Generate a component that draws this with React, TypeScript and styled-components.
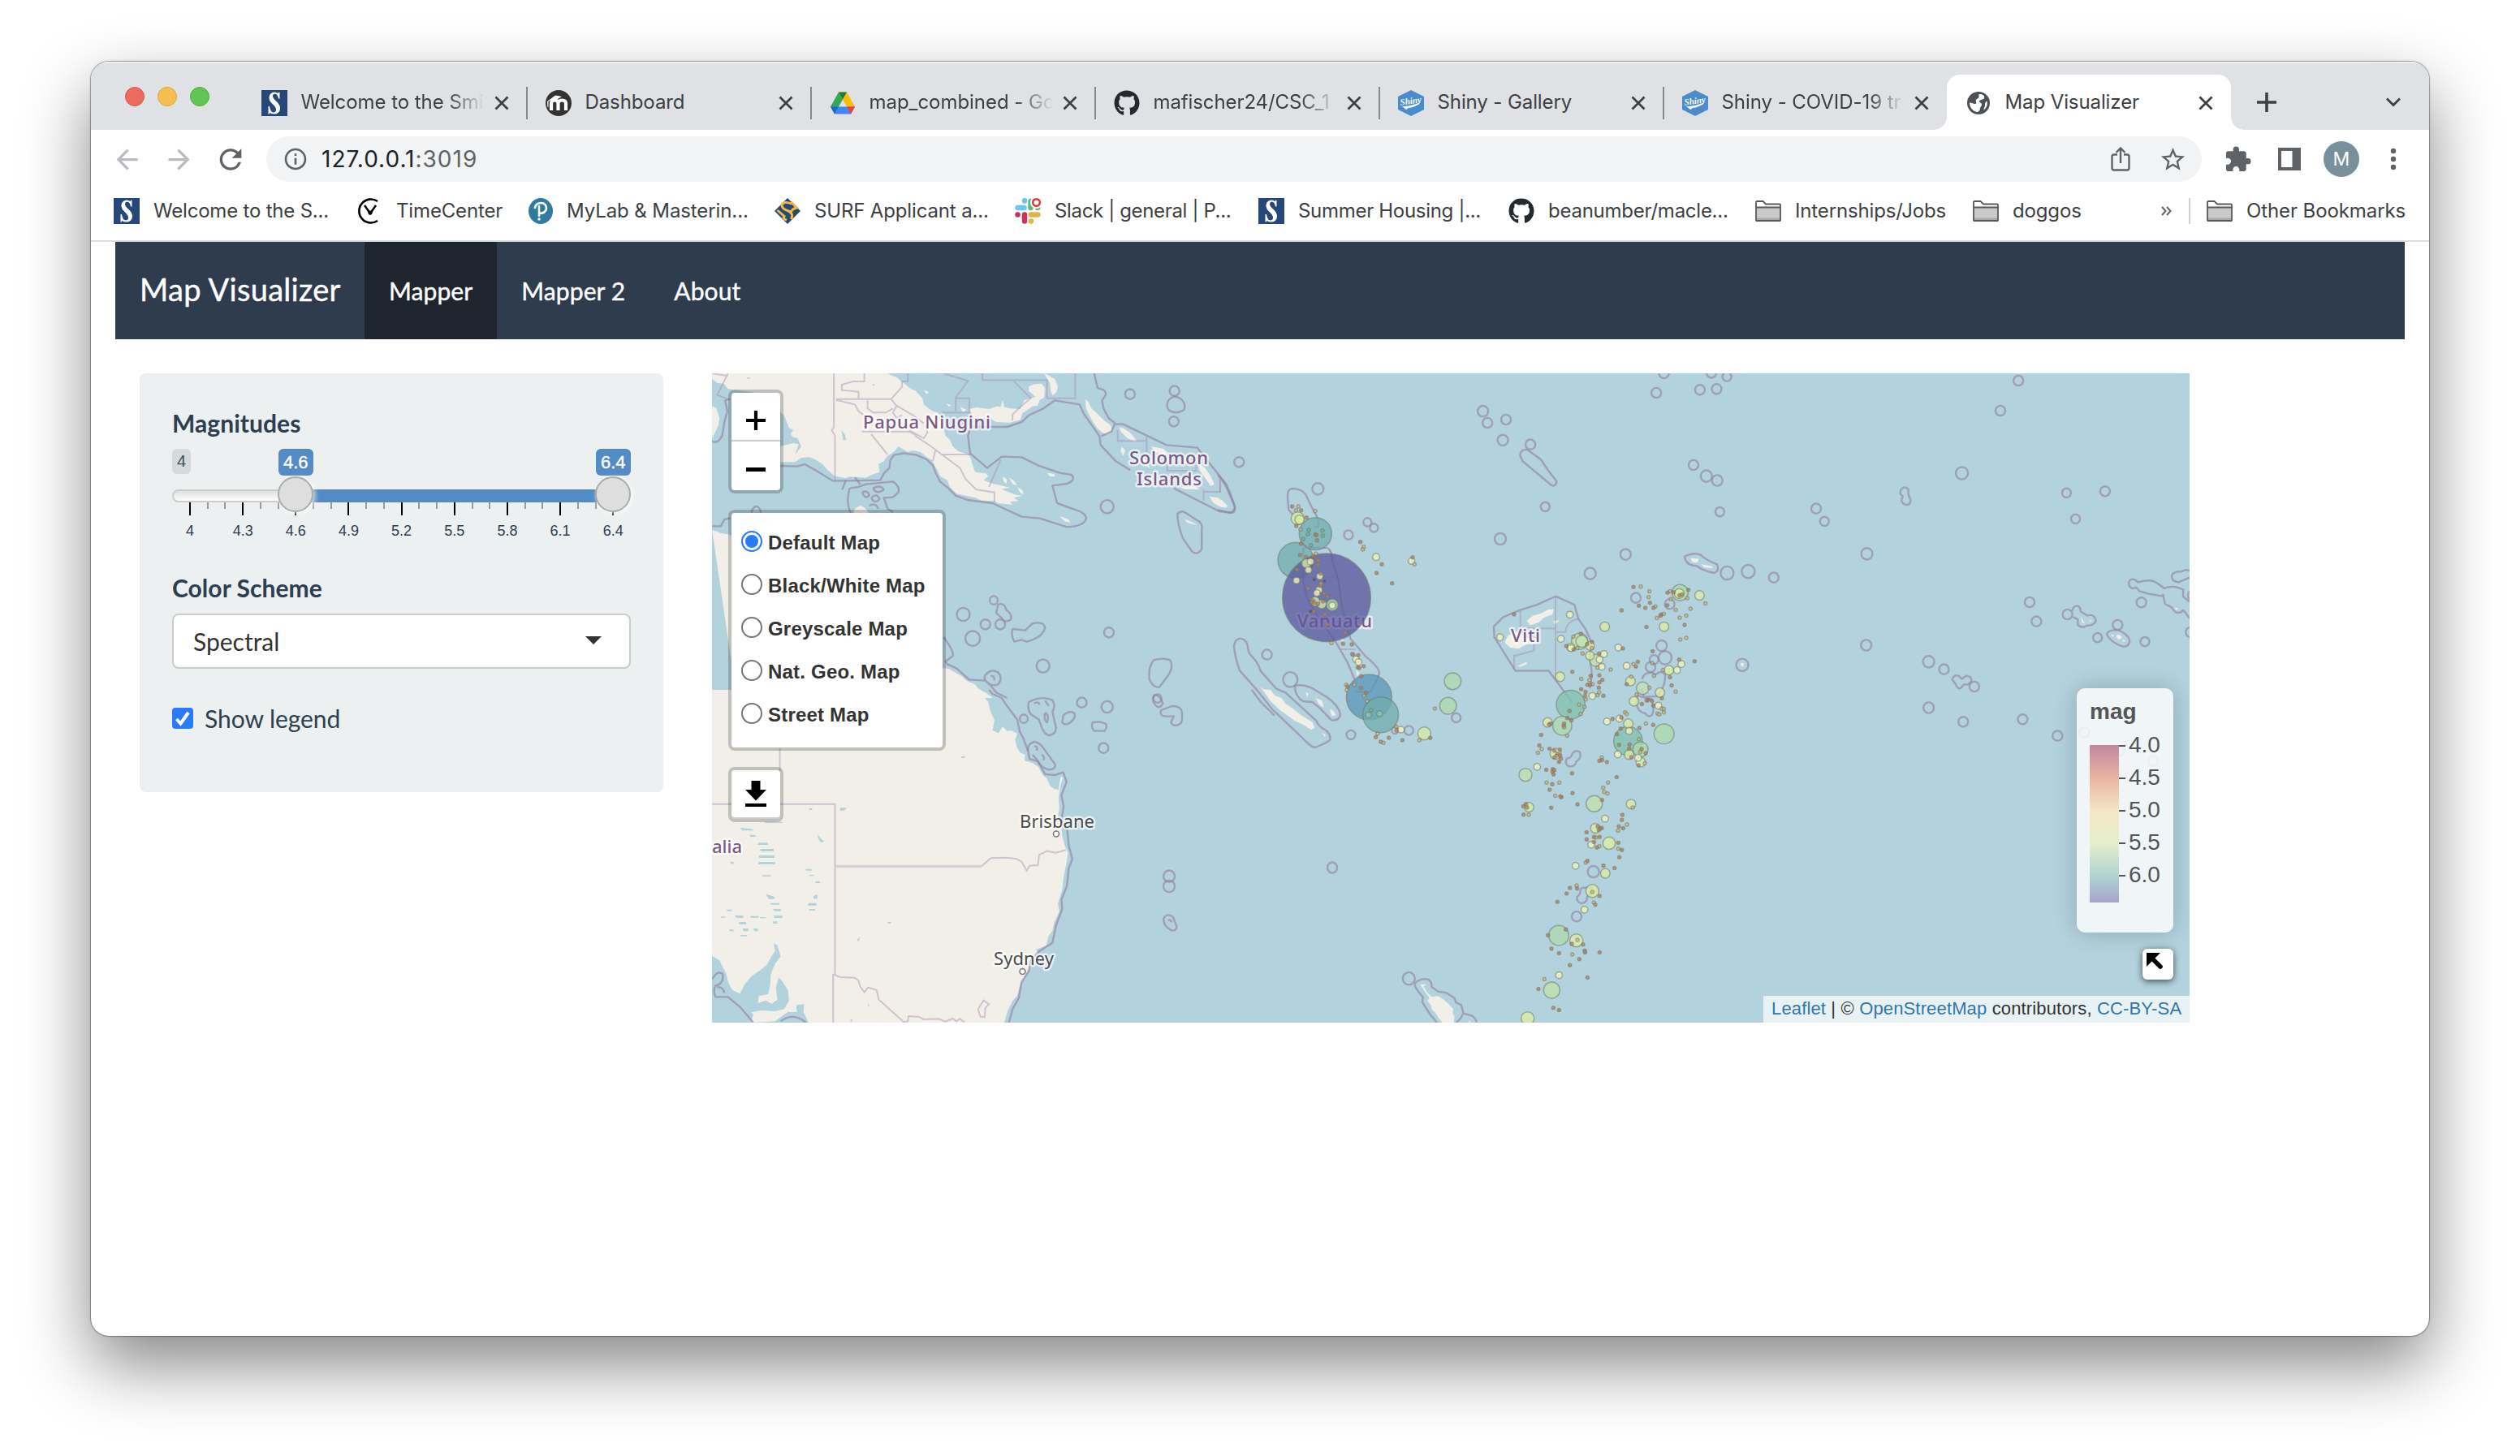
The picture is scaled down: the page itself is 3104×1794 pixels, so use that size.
import React from "react";
import styled, { createGlobalStyle, css } from "styled-components";
import { FaGithub } from "react-icons/fa";
import {
  MdArrowBack,
  MdArrowForward,
  MdExtension,
  MdInfoOutline,
  MdRefresh,
  MdStarOutline,
} from "react-icons/md";

const uiFont = `Inter, "Noto Sans", sans-serif`;
const appFont = `Lato, "Open Sans", sans-serif`;
const arial = `"Liberation Sans", Arial, sans-serif`;
const mapFont = `"Noto Sans", "Open Sans", sans-serif`;

const GlobalStyle = createGlobalStyle`
  * { box-sizing: border-box; }
  html, body { margin: 0; padding: 0; background: #fff; }
  body { width: 3104px; height: 1794px; overflow: hidden; font-family: ${uiFont}; }
`;

/* ---------- window ---------- */

const Desktop = styled.div`
  width: 3104px;
  height: 1794px;
  padding: 76px 112px 0;
  background: #fff;
`;

const Window = styled.div`
  width: 2880px;
  height: 1570px;
  border-radius: 22px;
  overflow: hidden;
  background: #fff;
  box-shadow: 0 0 0 1px rgba(0, 0, 0, 0.2), 0 36px 84px rgba(0, 0, 0, 0.48), 0 0 3px rgba(0, 0, 0, 0.4);
`;

/* ---------- tab strip ---------- */

const TabStrip = styled.div`
  height: 84px;
  display: flex;
  align-items: flex-end;
  background: #dfe1e5;
  box-shadow: inset 0 2px 0 #eff0f2;
  color: #3c4043;
`;

const Lights = styled.div`
  display: flex;
  gap: 16px;
  width: 187px;
  height: 82px;
  padding-left: 42px;
  align-items: center;
`;

const Light = styled.i<{ $c: string; $edge: string }>`
  width: 24px;
  height: 24px;
  border-radius: 50%;
  background: ${(p) => p.$c};
  border: 1px solid ${(p) => p.$edge};
`;

const Tab = styled.div<{ $active?: boolean; $last?: boolean }>`
  position: relative;
  width: ${(p) => (p.$last ? 349 : 350)}px;
  height: 68px;
  display: flex;
  align-items: center;
  padding: 2px 22px 0 23px;
  ${(p) =>
    p.$active
      ? css`
          background: #fff;
          border-radius: 16px 16px 0 0;
          &::before,
          &::after {
            content: "";
            position: absolute;
            bottom: 0;
            width: 16px;
            height: 16px;
          }
          &::before {
            left: -16px;
            background: radial-gradient(circle at 0 0, transparent 15.5px, #fff 16px);
          }
          &::after {
            right: -16px;
            background: radial-gradient(circle at 100% 0, transparent 15.5px, #fff 16px);
          }
        `
      : !p.$last &&
        css`
          &::after {
            content: "";
            position: absolute;
            right: -1px;
            top: 15px;
            width: 2px;
            height: 40px;
            background: #85888d;
          }
        `}
`;

const TabIcon = styled.span`
  width: 32px;
  height: 32px;
  flex: none;
  display: flex;
  align-items: center;
  justify-content: center;
`;

const TabTitle = styled.span<{ $fade?: boolean; $ls: number }>`
  flex: 1 1 0;
  width: 0;
  margin: -2px 12px 0 16.5px;
  font-size: 24px;
  line-height: 32px;
  white-space: nowrap;
  letter-spacing: ${(p) => p.$ls}px;
  ${(p) =>
    p.$fade &&
    css`
      mask-image: linear-gradient(90deg, #000 80%, transparent 100%);
    `}
`;

const StripButton = styled.span<{ $ml: number }>`
  height: 68px;
  display: flex;
  align-items: center;
  margin-left: ${(p) => p.$ml}px;
`;

/* ---------- toolbar ---------- */

const Toolbar = styled.div`
  height: 72px;
  display: flex;
  align-items: center;
  gap: 24px;
  padding: 0 24px;
  color: #5f6368;
`;

const ToolIcon = styled.span<{ $muted?: boolean }>`
  width: 40px;
  height: 40px;
  flex: none;
  display: flex;
  align-items: center;
  justify-content: center;
  color: ${(p) => (p.$muted ? "#b9bbbe" : "#5f6368")};
`;

const Omnibox = styled.div`
  flex: none;
  width: 2384px;
  height: 56px;
  border-radius: 28px;
  background: #f1f3f4;
  display: flex;
  align-items: center;
  gap: 24px;
  padding: 0 16px 0 20px;
`;

const Url = styled.span`
  flex: 1;
  margin-left: -8px;
  font-size: 28px;
  color: #5f6368;
  letter-spacing: 1px;
  b {
    font-weight: 400;
    color: #202124;
  }
`;

const Avatar = styled.span`
  width: 44px;
  height: 44px;
  margin: 0 -2px;
  flex: none;
  border-radius: 50%;
  background: #78909c;
  color: #fff;
  font-size: 23px;
  display: flex;
  align-items: center;
  justify-content: center;
`;

const Bookmarks = styled.div`
  height: 66px;
  display: flex;
  align-items: center;
  padding: 0 0 8px 28px;
  border-bottom: 2px solid #dadce0;
  color: #3c4043;
`;

const Bookmark = styled.div<{ $w: number; $ls: number }>`
  width: ${(p) => p.$w}px;
  flex: none;
  display: flex;
  align-items: center;
  gap: 17px;
  font-size: 24px;
  line-height: 32px;
  letter-spacing: ${(p) => p.$ls}px;
  white-space: nowrap;
`;

const BookmarkDivider = styled.span`
  width: 2px;
  height: 32px;
  margin-right: 20px;
  background: #cfd1d4;
`;

/* ---------- page ---------- */

const Navbar = styled.nav`
  height: 120px;
  margin: 0 30px;
  display: flex;
  background: #2f3c4e;
  color: #fff;
  font-family: ${appFont};
  -webkit-text-stroke: 0.4px #fff;
`;

const Brand = styled.span`
  width: 307px;
  padding-left: 30px;
  font-size: 38px;
  line-height: 117px;
  letter-spacing: 0.3px;
  white-space: nowrap;
`;

const NavItem = styled.a<{ $active?: boolean }>`
  padding: 0 30px;
  font-size: 30px;
  line-height: 121px;
  letter-spacing: 0.1px;
  background: ${(p) => (p.$active ? "#1e252e" : "transparent")};
`;

const Page = styled.main`
  display: flex;
  align-items: flex-start;
  gap: 60px;
  padding: 42px 60px 0;
`;

const Well = styled.form`
  width: 645px;
  height: 516px;
  padding: 38px;
  border: 2px solid #ebeff0;
  border-radius: 8px;
  background: #ecf0f1;
  color: #2c3e50;
  font-family: ${appFont};
`;

const FieldLabel = styled.label`
  display: block;
  height: 42px;
  line-height: 42px;
  margin-bottom: 11px;
  font-size: 30px;
  font-weight: 700;
  letter-spacing: 0.05px;
`;

const Slider = styled.div`
  position: relative;
  height: 110px;
  margin-bottom: 40px;
  font-family: ${arial};
`;

const SliderMin = styled.span`
  position: absolute;
  left: 0;
  top: 0;
  width: 23px;
  height: 31px;
  border-radius: 6px;
  background: #d4d9da;
  color: #444f5a;
  font-size: 20px;
  line-height: 30px;
  text-align: center;
`;

const SliderTag = styled.span`
  position: absolute;
  top: 0;
  width: 43px;
  height: 33px;
  margin-left: -21.5px;
  border-radius: 6px;
  background: #538bc5;
  color: #fff;
  font-size: 22px;
  line-height: 33px;
  text-align: center;
  -webkit-text-stroke: 0.4px #fff;
`;

const SliderTrack = styled.div`
  position: absolute;
  top: 50px;
  left: 0;
  width: 565px;
  height: 16px;
  border: 2px solid #ccc;
  border-radius: 16px;
  background: linear-gradient(#dedede, #fff);
`;

const SliderRange = styled.div`
  position: absolute;
  top: 50px;
  left: 152px;
  width: 391px;
  height: 16px;
  background: #538bc5;
`;

const SliderHandle = styled.div`
  position: absolute;
  top: 34px;
  width: 44px;
  height: 44px;
  margin-left: -22px;
  border-radius: 50%;
  border: 2px solid #ababab;
  background: #dedede;
  box-shadow: 2px 2px 6px rgba(255, 255, 255, 0.8);
`;

const Tick = styled.i<{ $major: boolean }>`
  position: absolute;
  top: 66px;
  width: 2px;
  margin-left: -1px;
  height: ${(p) => (p.$major ? 16 : 8)}px;
  background: ${(p) => (p.$major ? "#000" : "#999")};
`;

const TickLabel = styled.span`
  position: absolute;
  top: 90px;
  width: 60px;
  margin-left: -30px;
  font-size: 18px;
  line-height: 22px;
  text-align: center;
  color: #2c3e50;
`;

const Select = styled.div`
  height: 68px;
  margin-bottom: 40px;
  padding: 0 34px 0 24px;
  display: flex;
  align-items: center;
  justify-content: space-between;
  border: 2px solid #ccc;
  border-radius: 8px;
  background: #fff;
  color: #333;
  font-size: 30px;
`;

const Caret = styled.i`
  border: 10px solid transparent;
  border-top-color: #333;
  border-bottom: 0;
  margin-top: -3px;
`;

const CheckRow = styled.label`
  height: 42px;
  display: flex;
  align-items: center;
  gap: 14px;
  font-size: 30px;
  line-height: 42px;
  letter-spacing: -0.05px;
`;

const Checkbox = styled.span`
  width: 26px;
  height: 26px;
  border-radius: 4px;
  background: #2a7bfb;
  display: flex;
`;

/* ---------- leaflet map ---------- */

const MapFrame = styled.section`
  position: relative;
  width: 1820px;
  height: 800px;
  overflow: hidden;
  background: #b2d2dd;
  font-family: ${arial};
`;

const control = css`
  position: absolute;
  left: 20px;
  border: 4px solid rgba(0, 0, 0, 0.2);
  border-radius: 8px;
  background: #fff;
  background-clip: padding-box;
`;

const ZoomControl = styled.div`
  ${control}
  top: 20px;
  width: 68px;
  height: 128px;
`;

const ZoomButton = styled.div<{ $line?: boolean }>`
  height: 60px;
  padding-top: 9px;
  display: flex;
  align-items: center;
  justify-content: center;
  border-bottom: ${(p) => (p.$line ? "2px solid #ccc" : "0")};
`;

const LayerControl = styled.div`
  ${control}
  top: 168px;
  width: 268px;
  height: 297px;
  padding: 9px 12px;
`;

const LayerRow = styled.label`
  height: 53px;
  display: flex;
  align-items: center;
  gap: 7px;
  font-size: 24px;
  font-weight: 700;
  color: #333;
  white-space: nowrap;
  letter-spacing: 0.2px;
  span { padding-top: 2px; }
`;

const Radio = styled.i<{ $on?: boolean }>`
  width: 26px;
  height: 26px;
  flex: none;
  border-radius: 50%;
  border: 2px solid ${(p) => (p.$on ? "#2a7bfb" : "#767676")};
  background: #fff;
  margin-top: -1px;
  box-shadow: ${(p) => (p.$on ? "inset 0 0 0 3px #fff, inset 0 0 0 20px #2a7bfb" : "none")};
`;

const DownloadControl = styled.div`
  ${control}
  top: 485px;
  width: 68px;
  height: 68px;
  display: flex;
  justify-content: center;
  padding-top: 13px;
  box-shadow: inset 0 -2px 0 #ccc;
`;

const Legend = styled.div`
  position: absolute;
  left: 1681px;
  top: 388px;
  width: 119px;
  height: 301px;
  padding: 11px 0 0 16px;
  border-radius: 10px;
  background: rgba(255, 255, 255, 0.8);
  box-shadow: 0 0 30px rgba(0, 0, 0, 0.2);
  color: #555;
  font-size: 28px;
  line-height: 36px;
`;

const LegendScale = styled.svg`
  display: block;
  margin-top: 8px;
`;

const MiniToggle = styled.div`
  position: absolute;
  left: 1762px;
  top: 709px;
  width: 38px;
  height: 38px;
  padding: 5px;
  border-radius: 6px;
  background: #fff;
  box-shadow: 0 2px 9px rgba(0, 0, 0, 0.65);
`;

const Attribution = styled.div`
  position: absolute;
  right: 0;
  bottom: 0;
  width: 525px;
  height: 33px;
  padding-left: 10px;
  background: rgba(255, 255, 255, 0.7);
  color: #333;
  font-size: 22px;
  line-height: 32px;
  letter-spacing: 0.15px;
  white-space: nowrap;
  a { color: #2f78a8; }
`;

/* ---------- icons ---------- */

const SmithIcon = () => (
  <svg width="32" height="32" viewBox="0 0 32 32">
    <rect width="32" height="32" fill="#25477a" />
    <path d="M22.500 3V10.500H21Q20 4.500 16.500 4.500Q13.500 5 14 8Q14.500 10.500 18.500 14Q23.500 18.500 23 23.500Q22 29.500 15.500 29.500Q12.500 29.500 10.500 28L9.500 29.500H8.500V20H10Q11 27.500 15 27.500Q18.500 27 18 23.500Q17.500 20.500 13.500 17Q9 13 9.500 8.500Q10.500 3 16 2.500Q18.500 2.500 20.500 4L21.500 2.500Z" fill="#fff" />
  </svg>
);

const MoodleIcon = () => (
  <svg width="32" height="32" viewBox="0 0 32 32">
    <circle cx="16" cy="16" r="16" fill="#333" />
    <path d="M7 25V16.500Q7 12.500 11 12.500Q15.500 12.500 15.500 16.500V25M15.500 16.500Q15.500 12.500 20 12.500Q25 12.500 25 16.500V25" fill="none" stroke="#fff" strokeWidth="4.200" />
    <path d="M2 14L12 6.500L20 8L12 12.500L7 12L3.500 14V21H2.500Z" fill="#fff" />
  </svg>
);

const DriveIcon = () => (
  <svg width="30" height="28" viewBox="0 0 30 27">
    <path d="M10 0H20L30 18H20Z" fill="#fbbc04" />
    <path d="M10 0L0 18L5 27L15 9Z" fill="#34a853" />
    <path d="M10 0H20L15 9Z" fill="#188038" />
    <path d="M10 18H30L25 27H5Z" fill="#4285f4" />
    <path d="M0 18H10L5 27Z" fill="#1967d2" />
    <path d="M20 18H30L25 27Z" fill="#ea4335" />
  </svg>
);

const ShinyIcon = () => (
  <svg width="32" height="32" viewBox="0 0 32 32">
    <path d="M16 0L32 8V24L16 32L0 24V8Z" fill="#4a8ccb" />
    <text x="16" y="17" textAnchor="middle" fill="#fff" fontFamily="Liberation Serif, serif" fontStyle="italic" fontWeight="700" fontSize="11" transform="rotate(-8 16 16)">Shiny</text>
    <path d="M5 20Q16 20 28 15Q20 22 13 22L10 24Z" fill="#fff" />
  </svg>
);

const GlobeIcon = () => (
  <svg width="28" height="28" viewBox="0 0 28 28">
    <circle cx="14" cy="14" r="14" fill="#4d5156" />
    <path d="M14.500 3C19 2.500 22 5 21 8C20 10 16 9.500 15 11.500C14.500 13.500 18 13 18 16C18 18 16 18.500 16 20.500C16 22.500 14.500 25 12.500 25C7 24 3 19.500 3 13.500C6 13.500 8 15.500 10.500 15C12.500 14.500 10 12 11 10C12 8 14.500 8.500 14.500 6.500Z" fill="#fff" />
    <path d="M24.500 11.500C25.500 16 24 20 20.500 22.500C20 20 22.500 18.500 22 16C21.700 14 23 12.500 24.500 11.500Z" fill="#fff" />
  </svg>
);

const TimeCenterIcon = () => (
  <svg width="30" height="32" viewBox="0 0 30 32" fill="none" stroke="#000">
    <path d="M24 4A14.500 14.500 0 1 0 24 28" strokeWidth="2.600" />
    <path d="M8 9L15 19L22 9" strokeWidth="2.600" />
    <circle cx="15" cy="18" r="2.600" fill="#000" stroke="none" />
  </svg>
);

const PearsonIcon = () => (
  <svg width="30" height="32" viewBox="0 0 30 32">
    <ellipse cx="15" cy="16" rx="15" ry="16" fill="#327ba0" />
    <path d="M8 12Q9 6 16 6Q22 7 22 13Q21 19 13 19M13 10V22" fill="none" stroke="#fff" strokeWidth="2.600" strokeLinecap="round" />
    <circle cx="13" cy="26" r="1.700" fill="#fff" />
  </svg>
);

const SurfIcon = () => (
  <svg width="32" height="32" viewBox="0 0 32 32">
    <path d="M16 0L32 16L16 32L0 16Z" fill="#20497c" />
    <path d="M21 7Q11 3 9 9Q9 13 16 15.500Q24 18.500 20.500 26M3.500 15L12 22.500Q9.500 25.500 15 27M20.500 5L27.500 12Q21.500 13 20 18" fill="none" stroke="#f3b73b" strokeWidth="3" />
  </svg>
);

const SlackIcon = () => (
  <svg width="32" height="32" viewBox="0 0 32 32">
    <g strokeWidth="6.400" strokeLinecap="round" fill="none">
      <path d="M3.500 12H11.500M12 3.300V3.600" stroke="#6ac7ee" />
      <path d="M12 20.500V28.500M3.500 20.500H3.600" stroke="#d0305c" />
      <path d="M20 20.500H28.500M20 28.500V28.600" stroke="#e5b345" />
      <path d="M19.500 4V12M28 12H28.200" stroke="#5eb887" />
    </g>
    <circle cx="26.500" cy="5.500" r="7.500" fill="#fff" />
    <circle cx="26.500" cy="5.500" r="4.300" fill="#fff" stroke="#e3342f" strokeWidth="2.400" />
  </svg>
);

const FolderIcon = () => (
  <svg width="32" height="26" viewBox="0 0 32 26">
    <path d="M1 24.500V2.500Q1 1 2.500 1H9.500L13 4.500H30Q31 4.500 31 5.500V24.500Z" fill="#fff" stroke="#55585b" strokeWidth="1.800" />
    <path d="M2 9H30V24H2Z" fill="#c9c9c9" />
    <path d="M2 21.500H30V24H2Z" fill="#aaa" />
    <path d="M1 8.500H31M1 25H31" stroke="#55585b" strokeWidth="1.800" />
  </svg>
);

const CloseIcon = () => (
  <svg width="18" height="18" viewBox="0 0 18 18">
    <path d="M1.500 1.500L16.500 16.500M16.500 1.500L1.500 16.500" stroke="#3c4043" strokeWidth="2.800" />
  </svg>
);

/* ---------- map data ---------- */

type Sheet = { x: number; y: number; sx: number; sy: number };

// Every survey sheet keeps its own units; each maps onto the frame through an offset and a scale.
const sheets: Record<string, Sheet> = {
  north: { x: 870, y: 440, sx: 0.4464, sy: 0.33333 },
  south: { x: 870, y: 850, sx: 0.4464, sy: 0.33333 },
  vanuatu: { x: 1500, y: 560, sx: 0.33333, sy: 0.33333 },
  tonga: { x: 1780, y: 680, sx: 0.33333, sy: 0.38265 },
  pacific: { x: 1500, y: 440, sx: 0.7908, sy: 0.33333 },
  east: { x: 2150, y: 780, sx: 0.3699, sy: 0.33333 },
  cook: { x: 2500, y: 680, sx: 0.33333, sy: 0.33333 },
  zealand: { x: 1700, y: 1180, sx: 0.33333, sy: 0.33333 },
};

const land: [string, string][] = [
  ["north", "M16,60H500L512,68 525,74 540,92 548,100 565,118 578,125 588,140 596,152 600,175 612,188 625,200 640,206 648,225 652,250 660,290 672,305 680,330 695,348 722,360 730,375 735,400 742,425 772,430 778,440 765,455 790,468 812,474 838,482 815,488 850,508 872,512 848,520 862,532 838,535 846,546 805,540 795,532 760,530 742,520 700,508 690,505 672,480 665,455 645,440 638,420 630,400 622,380 610,372 592,352 572,345 555,350 530,330 518,350 500,365 490,385 475,395 478,425 455,436 440,446 395,442 385,448 355,440 335,418 320,395 300,378 285,370 262,372 245,388 205,388V330L240,318 255,322 245,360 262,330 252,300 240,296 232,285 240,270 228,262 222,240 215,215 205,205 130,130 60,118 48,98 30,95 16,80Z"],
  ["north", "M16,180L28,190 36,225 34,250 22,285 16,300Z M725,192L745,186 780,192 800,182 812,184 818,158 822,184 838,190 866,192 878,158 896,152 908,146 890,125 890,108 905,100 925,98 935,115 932,150 920,158 914,180 900,182 872,208 866,232 838,242 800,240 785,228 740,225Z M932,60L945,68 962,82 970,110 966,130 956,142 950,125 948,95 940,78Z M1046,155L1054,165 1062,188 1075,205 1098,235 1116,252 1118,272 1105,286 1092,278 1078,262 1066,238 1056,212 1048,190Z M1138,258L1152,264 1170,280 1188,310 1180,312 1160,298 1146,278Z M1226,330L1260,338 1275,355 1262,368 1240,350Z M1355,390L1375,408 1392,440 1402,470 1392,476 1378,450 1362,420Z M1388,515L1412,520 1430,540 1436,556 1420,554 1400,540Z M1320,598L1340,610 1355,622 1342,618 1325,610Z M1300,478L1350,480 1362,490 1320,488Z M818,442L830,452 828,468 820,460Z M835,445L850,458 858,475 846,470Z M858,480L872,492 876,508 866,502Z M940,428L960,432 962,442 948,440Z M975,588L1000,600 1004,612 988,606Z M1146,330L1156,345 1150,365 1144,350Z M1188,350L1215,385 1225,412 1210,400Z"],
  ["north", "M16,640L30,645 42,652 60,655 72,660V1260H790L770,1240 750,1225 742,1210 720,1198 705,1180 685,1165 670,1152 655,1150H72ZM410,560L425,548 440,560 450,580H405Z M600,122L614,128 608,138Z M662,172L675,176 670,184Z M700,184L718,195 708,204Z"],
  ["south", "M16,0H748L762,20 778,45 784,80 795,112 790,150 806,160 818,136 830,152 842,150 858,162 852,185 858,215 866,232 880,240 878,262 900,270 916,285 930,318 940,328 948,355 962,368 972,362 978,320 984,325 978,350 972,395 974,440 970,470 980,500 982,540 990,580 998,600 994,640 986,690 982,740 970,790 974,820 960,860 955,890 944,912 938,945 910,960 915,975 895,990 890,1030 880,1055 866,1090 858,1130 845,1150 832,1185 822,1230H282L268,1195 225,1190 190,1225 128,1230 110,1185 80,1130 62,1090 55,1050 36,1000 16,985Z"],
  ["vanuatu", "M155,855L170,868 195,870 210,890 235,900 250,920 285,945 310,965 350,990 358,1010 345,1018 318,1000 285,985 255,962 230,945 215,930 195,912 180,890Z M362,900L385,910 392,935 375,925Z M415,940L430,950 436,965 420,965Z M385,1030L398,1035 396,1044Z M325,880L335,884 330,896Z M0,165L15,168 38,192 25,196 0,190Z M440,680L460,678 468,690Z M512,795L524,810 514,818Z"],
  ["tonga", "M302,222L325,205 355,198 380,186 402,184 396,202 365,212 345,228 315,236Z M220,292L232,270 262,258 300,275 350,280 335,296 300,298 270,312 240,308Z M268,368L300,355 304,360 280,370Z M400,222L424,220 405,234Z M908,20L938,22 932,34 915,34Z M945,40L985,46 990,52 960,50Z M1092,358L1104,358 1102,368 1094,368Z"],
  ["cook", "M188,238L200,258 204,264 194,262Z M320,308L332,306 342,316 330,324 322,318Z M342,322L355,330 346,332Z M300,306L312,308 306,314Z M536,206L550,208 542,216Z M220,250L230,254 224,258Z"],
  ["zealand", "M148,98L172,100 160,106 175,130 190,145 215,142 235,155 250,168 270,190 268,205 275,220 272,240H230L215,222 205,205 190,190 188,176 175,160 182,148 165,125Z M326,232L336,236 330,240Z"],
];

const lakes: [string, string][] = [
  ["south", "M92,1125L105,1090 125,1058 150,1035 168,1015 180,985 190,965 186,935 196,945 205,985 190,1012 178,1050 176,1095 170,1125 145,1132 142,1158 165,1148 180,1160 196,1145 192,1100 200,1062 212,1082 226,1112 228,1150 215,1180 190,1188 150,1185 125,1192 106,1165Z"],
  ["south", "M16,985L36,1000 45,1030 58,1075 72,1110 96,1125 108,1165 130,1200 122,1230H16Z M190,1228L225,1195 250,1190 248,1165 270,1162 268,1190 282,1230Z M940,320L975,325 972,372 958,360Z"],
  ["south", "M145,565H170V573H140Z M148,588H186V597H150Z M144,612H188V621H146Z M145,636H190V645H143Z M155,685H178V690H155Z M165,755L188,765V773H172Z M178,788H202V794H178Z M184,810H206V818H188Z M186,834H210V843H188Z M282,788H304V797H280Z M284,810H300V816H284Z M296,762L306,756 307,772H296Z M78,834H102V843H84Z M90,858H110V867H90Z M100,882H116V892H102Z M130,882H142V892H132Z M122,836H144V842H122Z M58,812H70V818H56Z M40,838H52V842H40Z M184,856H196V864H184Z M64,886H75V892H64Z M148,840H164V844H148Z M308,535L316,550 326,560 316,564 308,548Z M370,436H388L380,446H368Z M284,438H292V444H284Z M702,246H716L712,252H704Z M500,858H510V864H502Z M415,925L425,912 420,930Z M92,510L125,514 132,520H100Z M272,662H290V668H276Z M284,684H296V688H284Z M300,708H314V714H302Z M446,1158L450,1170 446,1172Z M398,1218H402V1228H398Z M65,636H76V643H68Z M162,488H210V492H162Z M118,536H136V543H122Z M94,906H112V911H94Z"],
  ["north", "M372,270L382,285 386,305 378,308 376,290Z M458,98L466,102 462,108Z M40,1078H54V1083H42Z M112,76H120V80H112Z"],
];

const borders: [string, string][] = [
  ["north", "M352,60V260L346,270 355,290V455"],
  ["south", "M16,422H355V1052H350V1230 M203,215V300"],
  ["south", "M355,1055L370,1062 410,1064 420,1075 424,1095 436,1118 446,1100 470,1110 476,1145 545,1228 556,1225 558,1206 585,1208 600,1218 640,1216 660,1226 680,1215 690,1225 700,1216 712,1228 M765,1148L780,1162 770,1175 768,1210 756,1208 750,1180Z M760,652L785,622 830,620 856,625 870,635 884,668 892,650 915,648 918,610 940,596 965,602 992,592"],
  ["north", "M436,60V90H405L374,102V122L420,128V155L358,155 M358,158L410,175 420,200 440,220 M420,155L510,155 540,110V90H556V60 M510,155L525,180 515,205 525,225 540,215 M445,160V190L460,205H495L515,190 M430,275H560L580,290 M455,285L500,360 M560,270L600,300 610,280 605,250 M520,175L570,215 600,245 M575,290L620,330 650,360H730 M650,360L700,410 715,450 745,490 795,500V535 M632,345L625,385 M780,480L812,380 M762,60V85H940V152H1018V60 M655,60L722,88 688,150 M685,152H726V205H650 M688,150V200 M848,88L895,152 870,180 845,212V235 M1135,270V310H1215V295V350 M1272,380V420H1352V380 M1372,490V530 M1374,498H1418V455 M60,60L30,140 60,155 M16,60L60,70"],
  ["tonga", "M408,143V410 M278,190V245L410,247 M410,258H446Q445,225 495,215 M255,330V378 M255,335L328,318V298"],
  ["vanuatu", "M315,455H445 M455,720H510 M8,85V140 M410,350Q425,360 424,395 M315,345V455"],
];

const coastLimits: [string, string][] = [
  ["north", "M66,155L52,160 58,200 50,240 44,290Q30,325 16,310 M205,402L250,404 272,396 310,425 350,458 480,455 490,430 505,410 508,380 518,362 545,355 580,362 608,378 625,400 632,425 645,460 668,485 688,512 720,528 790,540 870,590 920,596 995,628Q1045,625 1048,595Q1046,575 1020,565L968,540 955,475 995,468Q1020,455 1008,435L975,428 915,400 870,370 815,368 775,410 728,356 722,290 730,258H830L870,240 890,215 930,190 962,160 1030,175 1042,210 1085,292 1088,325 1130,385 1170,418 M1070,60L1080,115Q1105,120 1102,140L1092,160 1096,190 1110,225 1128,245 1118,275 1090,292 M1128,248L1150,248 1270,325 1355,335 1375,370 1435,470Q1455,530 1458,555Q1455,578 1440,574L1415,570 1290,485 M1300,580Q1310,565 1322,575L1362,610Q1370,620 1367,640V710Q1355,735 1340,718L1315,670Q1300,620 1300,580Z"],
  ["north", "M395,485L420,480 440,470 515,460Q535,480 530,500L515,518 490,520 500,560 515,572 M395,485Q385,540 398,575 M375,490L385,455 M410,445L425,470 M430,500Q445,490 450,510Q440,530 430,500 M455,520Q470,500 478,525Q465,545 455,520 M460,485Q480,470 490,490Q470,510 460,485 M450,550Q465,535 475,560 M16,625L40,625 50,600 66,595 M125,575Q128,550 140,552Q150,560 150,575"],
  ["north", "M655,1035Q685,1090 680,1105L660,1125 665,1135 690,1150 725,1192 770,1196 785,1215 800,1240 830,1260 M770,1175Q785,1150 805,1165Q820,1185 805,1210Q785,1220 770,1195Q765,1185 770,1175Z M785,1180Q795,1175 795,1195"],
  ["south", "M780,0L790,15 815,30 830,60 858,110 865,155 875,180 888,228 892,255 915,265 935,312 962,315 985,305 994,340 980,390 986,430 980,480 996,520 1000,575 1010,625 1000,660 995,725 980,775 982,810 965,870 955,935 920,965 895,1000 890,1040 870,1080 862,1140 845,1180 835,1230"],
  ["south", "M890,45Q925,20 955,38Q965,60 955,80L965,140Q965,165 945,168Q930,165 918,110L895,90Q885,70 890,45Z M888,225Q885,200 905,192Q920,195 930,215L962,275Q965,295 945,295Q925,290 915,262L900,240 M905,50Q915,40 920,55 M935,40L945,60 M935,85Q948,95 940,120Q930,110 935,85 M905,210Q915,205 912,225 M925,240Q935,245 930,260 M985,95Q1000,75 1015,85Q1022,100 1005,120Q990,135 982,120Z M1235,20Q1250,15 1260,50Q1250,75 1238,55Q1228,35 1235,20Z M1255,75L1285,60Q1310,60 1312,80Q1315,115 1308,125Q1290,140 1282,120L1290,98H1265Q1250,95 1255,75Z M1066,120L1085,118 1102,125Q1108,140 1098,152H1070Q1060,135 1066,120Z M1262,845Q1272,822 1288,840L1298,875Q1296,895 1282,888Q1260,872 1262,845Z M1274,852Q1284,848 1283,860"],
  ["south", "M16,1070Q30,1035 45,1050Q50,1085 25,1095Q18,1110 25,1135L60,1135 95,1175 130,1230 M205,1225Q240,1190 275,1230 M30,1100Q45,1095 50,1120 M1505,0L1530,45 1568,95"],
  ["north", "M845,1005L880,1010 900,985Q930,975 935,1000Q930,1030 900,1045L885,1052 870,1045 850,1052Q840,1030 845,1005Z M805,915Q822,905 828,935Q845,950 840,970Q825,985 815,965L800,945Z M1235,1120Q1260,1110 1280,1120Q1290,1145 1275,1175L1250,1220Q1235,1225 1222,1190Q1220,1140 1235,1120Z M1275,160Q1290,135 1310,155Q1325,175 1318,195Q1295,215 1275,195Q1268,178 1275,160Z"],
  ["vanuatu", "M262,205L258,160Q256,128 275,126Q310,126 325,148L350,200 372,240V265L355,272 M315,345H405Q420,352 424,395L445,460 460,570 490,680 545,745Q600,790 597,810L565,878H510 M505,830L480,770 440,700 410,655 370,600 330,530 316,470V345 M262,205L300,245 M80,680Q105,682 110,705Q112,735 125,745Q150,770 158,800L215,865 250,880 365,985Q370,1005 400,1020Q418,1035 415,1055Q405,1065 360,1083Q345,1082 320,1055L200,940 140,865 82,800Q65,760 60,710Q62,685 80,680Z M285,855Q310,848 345,862L400,895Q445,925 453,960Q450,985 420,982L380,940 350,915 315,912Q285,895 285,855Z"],
  ["vanuatu", "M0,75Q30,110 40,140L64,195Q65,215 50,216L0,205"],
  ["tonga", "M408,143L340,170 275,188 215,210 180,240 182,275 260,383H383L470,485 M408,143L478,170 492,215 520,250 540,290 535,340 543,395 535,440"],
  ["tonga", "M728,410Q735,385 770,390Q775,400 790,388Q815,385 813,405Q812,430 795,450L785,465 735,467 725,440 M708,490Q710,515 740,520Q750,535 765,525Q775,505 765,475L740,470 710,462V490 M470,650Q480,635 498,645Q505,665 485,675Q480,695 455,690Q440,680 450,665Q465,665 470,650Z M505,1082L540,1080Q550,1095 525,1110Q525,1130 505,1132Q485,1130 488,1110Q500,1105 500,1090Z M885,15Q920,0 945,10Q960,25 1005,40Q1015,60 995,68Q950,60 930,45Q890,45 885,15Z"],
  ["pacific", "M471,365Q471,340 482,342L503,378 515,420 528,460Q526,480 520,474L475,385Z M1064,490Q1070,472 1076,490Q1074,510 1079,525Q1080,550 1070,545Q1062,535 1067,515Q1061,505 1064,490Z"],
  ["east", "M688,172Q695,150 712,160L720,170 735,158Q755,160 752,178L742,190 728,190 715,205Q705,205 700,190Z"],
  ["cook", "M370,105Q385,95 400,112Q450,98 470,115L498,135Q530,120 568,140L567,165 591,185 M591,245L568,215Q545,240 525,205L500,192 493,158V164L440,155 405,145 395,132Q370,140 367,120Q366,110 370,105 M530,80Q545,70 560,74Q575,62 591,70 M591,95L550,112Q525,110 525,90Q525,85 530,80 M158,218Q160,198 178,200Q190,205 188,220L212,235Q240,228 245,255Q235,275 212,272Q195,285 178,270V250L160,240 M285,305Q290,285 330,290Q365,305 370,330Q365,352 345,350Q300,335 285,305Z M591,145Q580,160 591,178"],
  ["zealand", "M128,95Q145,75 178,80Q192,90 190,108L215,125 245,130 275,150 280,165 300,175 307,205 M307,205L340,215Q358,230 355,240 M307,205Q295,235 280,238 M128,95Q125,110 158,145L156,165 185,210 210,240"],
];

const islets: [string, string][] = [
  ["north", "1169,137 1292,125 1290,238 1470,388 709,951,8 793,899,5 770,988 811,988 735,1040,9 1111,1018 929,1142,8 1547,1100 1106,553,8 1245,1262,5"],
  ["south", "876,107,5 1036,47 1106,63,7 1096,215 1277,689,7 1277,726,7"],
  ["vanuatu", "370,127,7 268,832,9 492,1036,5.5 706,1020,5.5 881,973,5.5 553,250,5 577,271,5 483,297,5.5 655,1020,4"],
  ["tonga", "705,148 830,168,6 800,302,6.5 813,341,8 772,347,5.5 759,371,6 548,1030,7 486,1174 1042,68,8 1120,63,8 1098,364,7.5 667,8,6.5"],
  ["pacific", "695,60 769,58 793,72,5.5 683,132 751,121 777,118 413,200,6.5 449,231 420,243 444,307,6.5 487,323 741,399 761,440,7 778,456,6.5 510,553,5.5 782,572,5.5 932,560 945,607,5.5 1159,429,7.5 1247,87 1219,198 1322,502,5.5 1382,496 1336,598,5.5 1011,727,7 440,672,7 580,800,7 866,815"],
  ["east", "402,45,6.5 610,106,7 661,134 762,198 610,276,6.5 725,328 923,319 1039,380 1128,367 1245,435 1357,472"],
  ["cook", "0,186 25,257 140,231 251,317,5.5 325,270 413,187 426,332,5.5 595,297"],
  ["zealand", "106,77,7.5"],
];

type MarkerSet = { sheet: string; fill: string; r: number; at: string };

const markers: MarkerSet[] = [
  { sheet: "vanuatu", fill: "#71adaf", r: 66, at: "288,391" },
  { sheet: "vanuatu", fill: "#5b579e", r: 163, at: "402,529" },
  { sheet: "vanuatu", fill: "#71adaf", r: 60, at: "361,293" },
  { sheet: "vanuatu", fill: "#5a97b7", r: 84, at: "559,897" },
  { sheet: "vanuatu", fill: "#71adaf", r: 66, at: "602,962" },
  { sheet: "tonga", fill: "#81c1ad", r: 53, at: "464,492 676,609" },
  { sheet: "vanuatu", fill: "#addaac", r: 31, at: "868,838 851,929 423,556,22" },
  { sheet: "tonga", fill: "#addaac", r: 37, at: "433,560,35 809,586 420,1235 722,636,28 868,131,30" },
  { sheet: "tonga", fill: "#c3e2ab", r: 30, at: "497,288 505,288,22 556,349,22 730,439,23 297,718,24 551,811 394,1411" },
  { sheet: "vanuatu", fill: "#d8eba0", r: 17, at: "295,236,24 302,241 327,403 384,553 360,543 763,1031,24" },
  { sheet: "vanuatu", fill: "#8cc4b0", r: 11, at: "557,963 598,958" },
  { sheet: "tonga", fill: "#e0eda2", r: 17.5, at: "590,241 809,241 425,402 940,140 535,334,16 536,303,16 827,381 685,416 794,453 698,481 677,553 379,549 680,653 723,677 310,822 687,812 555,890 592,1035 606,938,23 544,1092,24 485,1251,24 305,1502,24 408,650,20 465,307,15 865,134,18" },
  { sheet: "vanuatu", fill: "#f5f5ba", r: 12, at: "585,379,13 716,394 291,466 335,427 377,450 374,500 366,512 511,757 520,767 677,1017 343,396 423,558" },
  { sheet: "tonga", fill: "#f5f5ba", r: 12.5, at: "203,275 428,280 461,202 640,308 671,367 587,329 571,347 544,464 579,370 788,495 873,361 857,381 598,546 644,537 680,577 638,652 340,692 591,859 540,943 482,1011 515,1152 421,1363 465,310 713,663" },
  { sheet: "vanuatu", fill: "#eab876", r: 6, at: "298,192 289,206 360,209 306,277 363,367 381,478 420,697 497,737 541,892 552,912 505,851 475,851 477,871 591,1032 612,1066 745,1056 802,939 539,342 536,351 727,406 659,1006" },
  { sheet: "vanuatu", fill: "#7cb49b", r: 6, at: "387,281 333,295 388,301 316,312 344,336 336,279 567,945" },
  { sheet: "tonga", fill: "#eab876", r: 6, at: "723,112 755,127 752,146 777,176 831,127 895,149 962,166 907,183 852,187 867,212 891,205 783,213 808,199 869,282 891,277 765,358 696,361 772,399 852,450 612,379 508,327 503,409 533,413 545,426 563,461 569,452 520,475 515,499 501,522 495,492 451,592 440,565 357,635 343,647 375,743 422,743 407,785 470,1296 367,1376 639,898 672,878 570,948 640,956 602,743 584,759 588,773 600,778 579,662 665,517 671,522 742,553 716,603 708,459 785,521 791,523 808,517 800,505 693,823 309,846 520,1000 486,1074 550,1129 544,1095 489,1249 834,152 755,438 721,644 808,505 474,273 557,920 688,402 489,310 805,380 563,373 542,310 738,681 412,656" },
  { sheet: "vanuatu", fill: "#d2784b", r: 6, at: "275,192 308,206 328,233 290,264 308,329 304,371 326,379 352,376 370,391 371,408 292,425 361,296 364,298 367,317 380,440 379,485 334,494 394,514 405,526 352,540 347,546 370,552 389,543 355,580 396,591 406,628 471,658 463,700 495,702 519,742 539,782 518,787 523,789 530,820 529,863 548,881 527,323 606,406 587,438 644,476 720,380 682,1056 632,1047 602,1062 785,1048 660,1020 584,1045 479,857 500,740 357,548" },
  { sheet: "vanuatu", fill: "#5a3f86", r: 6, at: "357,463 394,468 343,580" },
  { sheet: "tonga", fill: "#d2784b", r: 6, at: "255,201 696,113 822,131 899,122 716,173 740,180 757,164 770,180 821,172 652,188 744,242 798,202 796,206 885,235 767,320 865,347 922,352 712,354 705,369 657,311 470,386 538,399 570,397 581,412 570,420 526,428 568,437 503,442 585,463 517,463 536,428 519,451 460,512 452,535 467,542 440,553 438,560 390,553 384,556 355,589 348,623 386,634 404,640 424,637 416,650 404,662 421,676 425,655 428,666 398,700 397,708 404,703 401,717 396,748 386,766 430,790 426,787 392,824 471,777 489,813 469,713 374,702 580,799 580,670 570,673 598,677 634,725 619,538 651,533 649,569 635,587 718,567 769,557 643,621 682,620 680,634 726,635 741,648 715,687 688,661 801,471 769,495 764,480 750,476 745,479 727,490 837,430 831,404 671,426 289,819 299,812 290,846 303,823 655,847 653,863 642,884 658,890 579,889 568,896 550,918 571,918 523,903 523,926 550,934 561,952 640,937 653,960 644,983 585,1010 626,1018 526,995 461,1082 449,1100 415,1127 488,1084 571,1108 555,1136 446,1216 380,1234 393,1278 421,1292 516,1284 517,1290 571,1290 510,1264 496,1311 461,1331 526,1371 345,1407 421,1475 400,1468 543,290 525,297 569,327 502,263 448,303 475,314 866,140 875,137 845,130 564,884 573,891 468,1262" },
];

const parse = (s: string) => s.split(" ").map((p) => p.split(",").map(Number));
const toFrame = (s: Sheet) => `translate(${s.x} ${s.y}) scale(${s.sx} ${s.sy})`;

const Shapes = ({ items, ...rest }: { items: [string, string][] } & React.SVGProps<SVGPathElement>) => (
  <>
    {items.map(([sheet, d], i) => (
      <path key={i} d={d} transform={toFrame(sheets[sheet])} vectorEffect="non-scaling-stroke" {...rest} />
    ))}
  </>
);

const MapDrawing = styled.svg`
  display: block;
`;

const PlaceText = styled.text<{ $city?: boolean }>`
  font-family: ${mapFont};
  font-size: 22px;
  fill: ${(p) => (p.$city ? "#4a4a4a" : "#7b5a83")};
  stroke: rgba(255, 255, 255, 0.7);
  stroke-width: 5px;
  paint-order: stroke;
  stroke-linejoin: round;
  font-weight: ${(p) => (p.$city ? 400 : 500)};
`;

const places: [string, number, number, number, boolean?][] = [
  ["Papua Niugini", 1063, 528, 157],
  ["Solomon", 1391, 571.5, 97],
  ["Islands", 1400, 598, 80],
  ["Vanuatu", 1598, 773, 92],
  ["Viti", 1861, 790.5, 36],
  ["alia", 877, 1051, 37],
  ["Brisbane", 1256, 1020, 92, true],
  ["Sydney", 1224, 1189, 74, true],
];

const QuakeMap = () => (
  <MapDrawing width="1820" height="800" viewBox="877 460 1820 800">
    <rect x="877" y="460" width="1820" height="800" fill="#b2d2dd" />
    <Shapes items={land} fill="#f2efe9" />
    <Shapes items={lakes} fill="#b2d2dd" />
    <Shapes items={borders} fill="none" stroke="#a98bb0" strokeOpacity={0.45} strokeWidth={2} />
    <path d="M1029 1067.500H1209" stroke="#dccfd8" strokeWidth="3.500" />
    <Shapes items={coastLimits} fill="none" stroke="#937da0" strokeOpacity={0.6} strokeWidth={2.4} strokeLinejoin="round" />
    {islets.map(([sheet, pts]) =>
      parse(pts).map(([x, y, r], i) => {
        const s = sheets[sheet];
        return (
          <ellipse key={sheet + i} cx={s.x + x * s.sx} cy={s.y + y * s.sy} rx={r || 6} ry={(r || 6) * 1.02} fill="none" stroke="#937da0" strokeOpacity={0.6} strokeWidth={2.4} />
        );
      })
    )}
    <ellipse cx="1641" cy="1069" rx="6" ry="6.500" fill="none" stroke="#937da0" strokeOpacity={0.6} strokeWidth={2.4} />
    {places.map(([name, x, y, w, city]) => (
      <PlaceText key={name} x={x} y={y} textLength={w} $city={city}>
        {name}
      </PlaceText>
    ))}
    <circle cx="1301" cy="1027.500" r="3.500" fill="#fff" stroke="#777" strokeWidth="1.500" />
    <circle cx="1259.500" cy="1197" r="3.500" fill="#fff" stroke="#777" strokeWidth="1.500" />
    {markers.map((m, k) =>
      parse(m.at).map(([x, y, r], i) => {
        const s = sheets[m.sheet];
        return (
          <circle key={k + "-" + i} cx={s.x + x * s.sx} cy={s.y + y * s.sy} r={(r || m.r) / 3} fill={m.fill} fillOpacity={0.76} stroke="#6f7a6a" strokeOpacity={0.55} strokeWidth={1.5} />
        );
      })
    )}
  </MapDrawing>
);

/* ---------- content ---------- */

const tabs = [
  { icon: <SmithIcon />, title: "Welcome to the Smi", fade: true, ls: -0.05 },
  { icon: <MoodleIcon />, title: "Dashboard", ls: -0.1 },
  { icon: <DriveIcon />, title: "map_combined - Go", fade: true, ls: -0.05 },
  { icon: <FaGithub size={32} color="#24292f" />, title: "mafischer24/CSC_1", fade: true, ls: -0.1 },
  { icon: <ShinyIcon />, title: "Shiny - Gallery", ls: -0.1 },
  { icon: <ShinyIcon />, title: "Shiny - COVID-19 tr", fade: true, ls: -0.05 },
  { icon: <GlobeIcon />, title: "Map Visualizer", active: true, ls: -0.1 },
];

const bookmarks = [
  { icon: <SmithIcon />, title: "Welcome to the S...", w: 301, ls: -0.2 },
  { icon: <TimeCenterIcon />, title: "TimeCenter", w: 210, ls: -0.15 },
  { icon: <PearsonIcon />, title: "MyLab & Masterin...", w: 303, ls: -0.1 },
  { icon: <SurfIcon />, title: "SURF Applicant a...", w: 296, ls: -0.15 },
  { icon: <SlackIcon />, title: "Slack | general | P...", w: 300, ls: -0.35 },
  { icon: <SmithIcon />, title: "Summer Housing |...", w: 308, ls: -0.3 },
  { icon: <FaGithub size={32} color="#24292f" />, title: "beanumber/macle...", w: 304, ls: -0.25 },
  { icon: <FolderIcon />, title: "Internships/Jobs", w: 268, ls: -0.15 },
  { icon: <FolderIcon />, title: "doggos", w: 232, ls: -0.15 },
];

const layers = ["Default Map", "Black/White Map", "Greyscale Map", "Nat. Geo. Map", "Street Map"];

const tickAt = (i: number) => 22 + i * 21.72;

const MagnitudeSlider = () => (
  <Slider>
    <SliderMin>4</SliderMin>
    <SliderTrack />
    <SliderRange />
    {Array.from({ length: 25 }, (_, i) => (
      <Tick key={i} $major={i % 3 === 0} style={{ left: tickAt(i) }} />
    ))}
    {Array.from({ length: 9 }, (_, i) => (
      <TickLabel key={i} style={{ left: tickAt(i * 3) }}>
        {i === 0 ? "4" : (4 + i * 0.3).toFixed(1)}
      </TickLabel>
    ))}
    {[4.6, 6.4].map((v) => (
      <React.Fragment key={v}>
        <SliderTag style={{ left: tickAt((v - 4) * 10) }}>{v}</SliderTag>
        <SliderHandle style={{ left: tickAt((v - 4) * 10) }} />
      </React.Fragment>
    ))}
  </Slider>
);

const legendStops = ["#c1879f", "#e9b3a3", "#f3e7c6", "#e6efcb", "#b0d3d2", "#a7a3cb"];
const legendOffsets = [0, 0.21, 0.42, 0.62, 0.83, 1];

const App = () => (
  <Desktop>
    <GlobalStyle />
    <Window>
      <TabStrip>
        <Lights>
          <Light $c="#ed6a5e" $edge="#d9564b" />
          <Light $c="#f5bf4f" $edge="#dda73c" />
          <Light $c="#61c554" $edge="#50ab43" />
        </Lights>
        {tabs.map((t, i) => (
          <Tab key={t.title} $active={t.active} $last={i === 5}>
            <TabIcon>{t.icon}</TabIcon>
            <TabTitle $fade={t.fade} $ls={t.ls}>{t.title}</TabTitle>
            <CloseIcon />
          </Tab>
        ))}
        <StripButton $ml={31}>
          <svg width="26" height="26" viewBox="0 0 26 26">
            <path d="M13 1V25M1 13H25" stroke="#3c4043" strokeWidth="3.600" />
          </svg>
        </StripButton>
        <StripButton $ml={134}>
          <svg width="18" height="12" viewBox="0 0 18 12">
            <path d="M1 1.500L9 9.500L17 1.500" fill="none" stroke="#3c4043" strokeWidth="2.800" />
          </svg>
        </StripButton>
      </TabStrip>

      <Toolbar>
        <ToolIcon $muted><MdArrowBack size={39} /></ToolIcon>
        <ToolIcon $muted><MdArrowForward size={39} /></ToolIcon>
        <ToolIcon><MdRefresh size={41} /></ToolIcon>
        <Omnibox>
          <MdInfoOutline size={32} />
          <Url><b>127.0.0.1</b>:3019</Url>
          <ToolIcon>
            <svg width="24" height="30" viewBox="0 0 24 30" fill="none" stroke="#5f6368" strokeWidth="2.400">
              <path d="M8 9.500H4Q1.500 9.500 1.500 12V26Q1.500 28.500 4 28.500H20Q22.500 28.500 22.500 26V12Q22.500 9.500 20 9.500H16M12 20V2M6.500 7L12 1.500L17.500 7" />
            </svg>
          </ToolIcon>
          <ToolIcon><MdStarOutline size={35} /></ToolIcon>
        </Omnibox>
        <ToolIcon><MdExtension size={35} /></ToolIcon>
        <ToolIcon>
          <svg width="28" height="28" viewBox="0 0 28 28">
            <path d="M0 0H28V28H0ZM4 4V24H17.500V4Z" fill="#5f6368" fillRule="evenodd" />
          </svg>
        </ToolIcon>
        <Avatar>M</Avatar>
        <ToolIcon>
          <svg width="8" height="28" viewBox="0 0 8 28" fill="#5f6368">
            <circle cx="4" cy="4" r="3.200" />
            <circle cx="4" cy="14" r="3.200" />
            <circle cx="4" cy="24" r="3.200" />
          </svg>
        </ToolIcon>
      </Toolbar>

      <Bookmarks>
        {bookmarks.map((b) => (
          <Bookmark key={b.title} $w={b.w} $ls={b.ls}>
            {b.icon}
            <span>{b.title}</span>
          </Bookmark>
        ))}
        <Bookmark $w={34} $ls={0}>
          <svg width="13" height="12" viewBox="0 0 13 12">
            <path d="M1 1L5.500 6L1 11M7 1L11.500 6L7 11" fill="none" stroke="#5f6368" strokeWidth="2" />
          </svg>
        </Bookmark>
        <BookmarkDivider />
        <Bookmark $w={250} $ls={-0.1}>
          <FolderIcon />
          <span>Other Bookmarks</span>
        </Bookmark>
      </Bookmarks>

      <Navbar>
        <Brand>Map Visualizer</Brand>
        <NavItem $active>Mapper</NavItem>
        <NavItem>Mapper 2</NavItem>
        <NavItem>About</NavItem>
      </Navbar>

      <Page>
        <Well>
          <FieldLabel>Magnitudes</FieldLabel>
          <MagnitudeSlider />
          <FieldLabel>Color Scheme</FieldLabel>
          <Select>
            Spectral
            <Caret />
          </Select>
          <CheckRow>
            <Checkbox>
              <svg width="26" height="26" viewBox="0 0 26 26">
                <path d="M5.500 14L10.500 19.500L20 6" fill="none" stroke="#fff" strokeWidth="4" />
              </svg>
            </Checkbox>
            Show legend
          </CheckRow>
        </Well>

        <MapFrame>
          <QuakeMap />
          <ZoomControl>
            <ZoomButton $line>
              <svg width="24" height="24" viewBox="0 0 24 24">
                <path d="M12 0V24M0 12H24" stroke="#000" strokeWidth="4.200" />
              </svg>
            </ZoomButton>
            <ZoomButton>
              <svg width="24" height="5" viewBox="0 0 24 5">
                <rect width="24" height="5" />
              </svg>
            </ZoomButton>
          </ZoomControl>
          <LayerControl>
            {layers.map((name, i) => (
              <LayerRow key={name}>
                <Radio $on={i === 0} />
                <span>{name}</span>
              </LayerRow>
            ))}
          </LayerControl>
          <DownloadControl>
            <svg width="26" height="32" viewBox="0 0 26 32">
              <path d="M7.500 0H18.500V11H26L13 24.500L0 11H7.500ZM0 28H26V32H0Z" />
            </svg>
          </DownloadControl>
          <Legend>
            <b>mag</b>
            <LegendScale width="100" height="230" viewBox="0 0 100 230">
              <defs>
                <linearGradient id="mag" x1="0" y1="0" x2="0" y2="1">
                  {legendStops.map((c, i) => (
                    <stop key={c} offset={legendOffsets[i]} stopColor={c} />
                  ))}
                </linearGradient>
              </defs>
              <rect x="0" y="15" width="36" height="194" fill="url(#mag)" />
              {["4.0", "4.5", "5.0", "5.5", "6.0"].map((t, i) => (
                <g key={t}>
                  <rect x="36" y={15 + i * 40} width="8" height="2" fill="#555" />
                  <text x="48" y={24 + i * 40} fill="#555" fontSize="28">{t}</text>
                </g>
              ))}
            </LegendScale>
          </Legend>
          <MiniToggle>
            <svg width="20" height="20" viewBox="0 0 20 20">
              <path d="M0 0H17L0 17Z" />
              <path d="M5 5L17 17" stroke="#000" strokeWidth="5.500" strokeLinecap="round" />
            </svg>
          </MiniToggle>
          <Attribution>
            <a>Leaflet</a> | © <a>OpenStreetMap</a> contributors, <a>CC-BY-SA</a>
          </Attribution>
        </MapFrame>
      </Page>
    </Window>
  </Desktop>
);

export default App;
